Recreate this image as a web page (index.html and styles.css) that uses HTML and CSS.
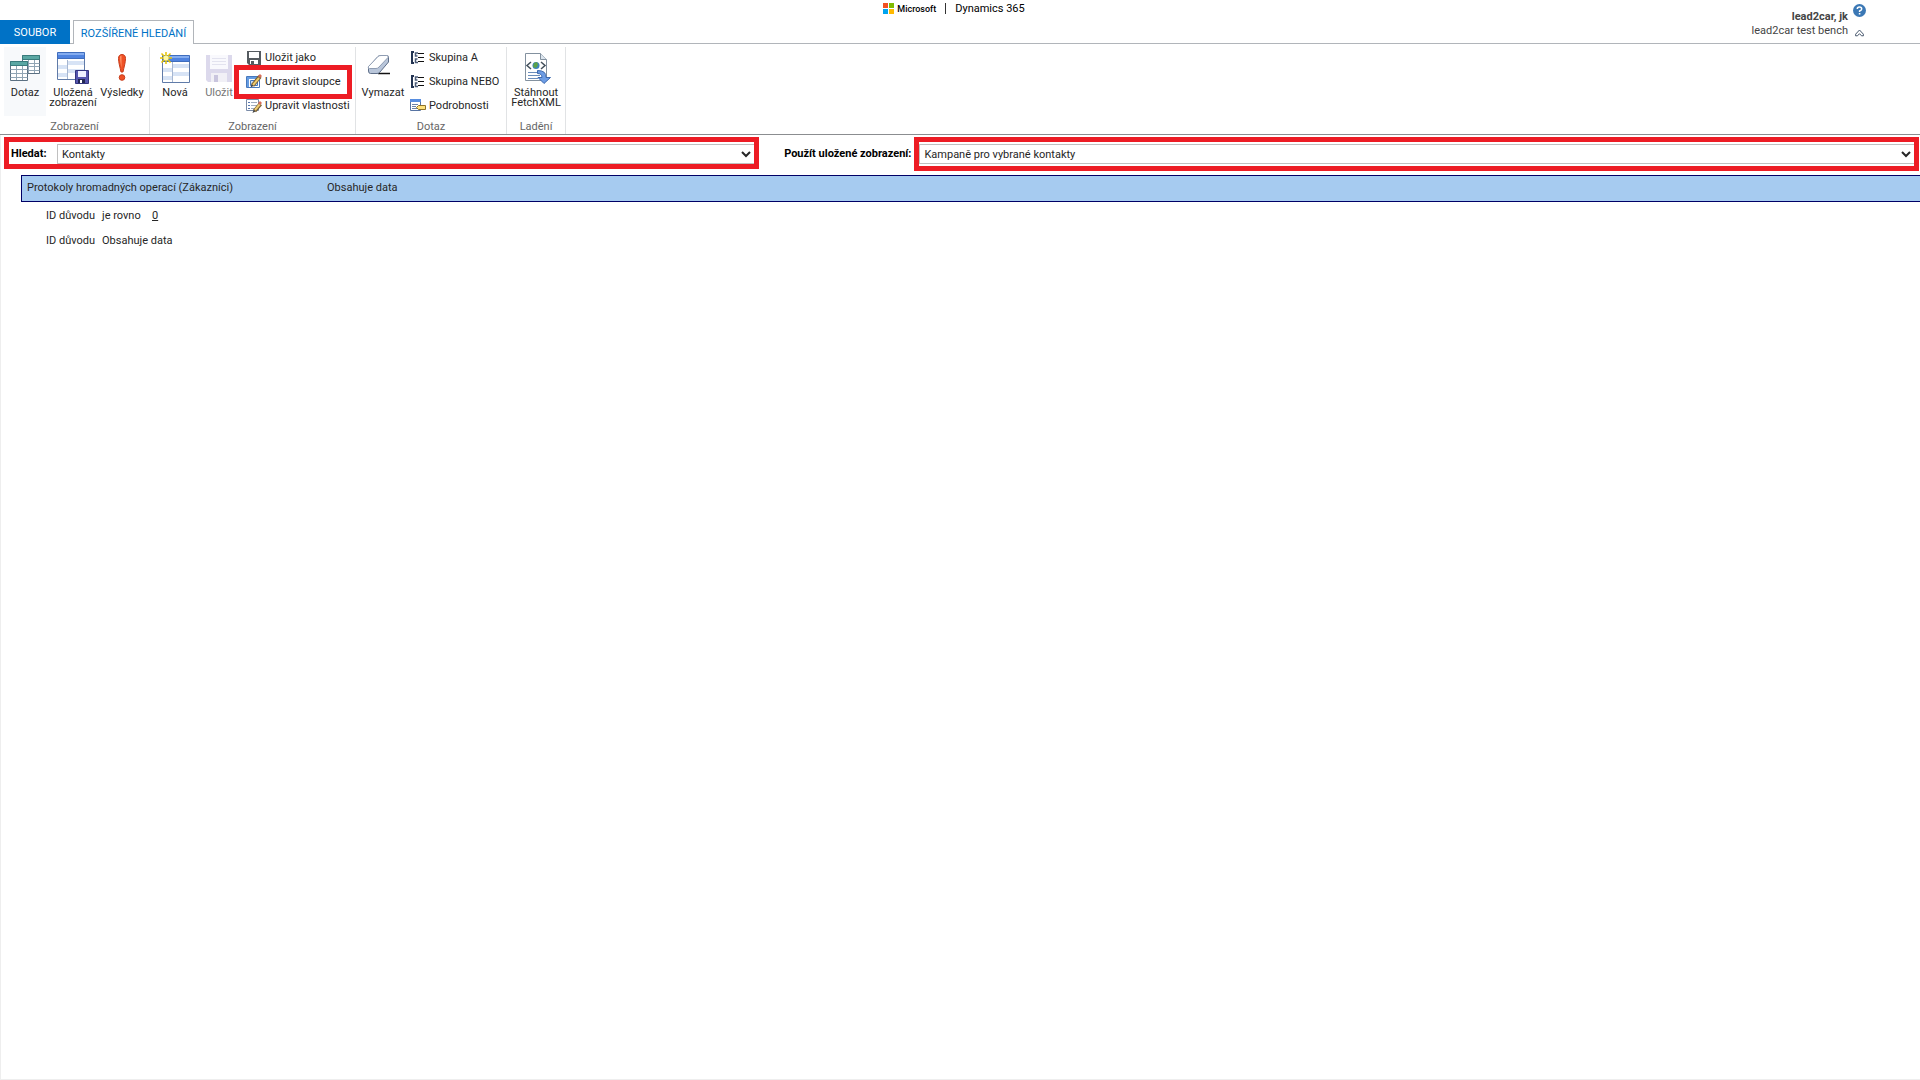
FILE: index.html
```html
<!DOCTYPE html>
<html lang="cs">
<head>
    <meta charset="UTF-8">
    <meta name="viewport" content="width=device-width, initial-scale=1.0">
    <title>Rozšířené hledání</title>
    <link rel="stylesheet" href="styles.css">
</head>
<body>

<header class="top">
    <nav class="tabs">
        <button class="tab tab-file">SOUBOR</button>
        <button class="tab tab-active">ROZŠÍŘENÉ HLEDÁNÍ</button>
    </nav>
    <div class="brand">
        <svg class="ms-logo" width="11" height="11" viewBox="0 0 11 11">
            <path fill="#f25022" d="M0 0h5v5H0z"/>
            <path fill="#7fba00" d="M6 0h5v5H6z"/>
            <path fill="#00a4ef" d="M0 6h5v5H0z"/>
            <path fill="#ffb900" d="M6 6h5v5H6z"/>
        </svg>
        <span class="brand-ms">Microsoft</span>
        <span class="brand-line"></span>
        <span class="brand-app">Dynamics 365</span>
    </div>
    <div class="user">
        <div class="user-text">
            <strong>lead2car, jk</strong>
            <span>lead2car test bench</span>
        </div>
        <div class="user-icons">
            <button class="icon-button" aria-label="Nápověda">
                <svg width="13" height="13" viewBox="0 0 13 13">
                    <circle cx="6.5" cy="6.5" r="6.5" fill="#3b78b5"/>
                    <path d="M4.3 5Q4.3 3 6.5 3T8.7 5Q8.7 6.1 6.6 7v1.1" fill="none" stroke="#fff" stroke-width="1.5"/>
                    <path fill="#fff" d="M5.8 9h1.6v1.5H5.8z"/>
                </svg>
            </button>
            <button class="icon-button" aria-label="Sbalit pás karet">
                <svg width="9" height="8" viewBox="0 0 9 8">
                    <path d="M.6 5.2 4.5 1l3.900 4.200v1.600H6.500L4.500 4.700 2.500 6.800H.6z" fill="#fff" stroke="#44546a"/>
                </svg>
            </button>
        </div>
    </div>
</header>

<!-- Ribbon -->
<section class="ribbon">
    <div class="group group-show">
        <div class="tools">
            <button class="big selected">
                <svg width="32" height="32" viewBox="0 0 32 32">
                    <path fill="#fff" stroke="#5b7082" d="M13.500 3.500h17v18h-17z"/>
                    <path fill="#5aa7a3" stroke="#397b7c" d="M13.500 3.500h17v4h-17z"/>
                    <path fill="none" stroke="#91a5b4" d="M13.500 11.500h17M13.500 14.500h17M13.500 18.500h17M19.500 8v13M25.500 8v13"/>
                    <path fill="#fff" stroke="#5b7082" d="M1.500 9.500h17v19h-17z"/>
                    <path fill="#5aa7a3" stroke="#397b7c" d="M1.500 9.500h17v4h-17z"/>
                    <path fill="none" stroke="#91a5b4" d="M1.500 17.500h17M1.500 21.500h17M1.500 25.500h17M7.500 14v14M13.500 14v14"/>
                </svg>
                <span>Dotaz</span>
            </button>
            <button class="big saved">
                <svg width="32" height="32" viewBox="0 0 32 32">
                    <path fill="#fff" stroke="#607ba8" d="M.5 1.500h27v26H.5z"/>
                    <path fill="#d7e3f5" d="M11 9h16v4H11zM11 17h16v4H11zM1 13h10v4H1zM1 21h10v4H1z"/>
                    <path fill="none" stroke="#a6b6d0" d="M10.500 8v19"/>
                    <path fill="#4f83df" stroke="#3f6dbd" d="M.5.500h27v6H.5z"/>
                    <path fill="#84acef" d="M1 1h26v2H1z"/>
                    <path fill="#5656ae" stroke="#33347e" d="M18.500 18.500h13v13h-13z"/>
                    <path fill="#eef0ff" d="M21 19h8v6h-8z"/>
                    <path fill="#222753" d="M21 27h7v4h-7z"/>
                    <path fill="#fff" d="M23 28h2v3h-2z"/>
                </svg>
                <span>Uložená zobrazení</span>
            </button>
            <button class="big results">
                <svg width="32" height="32" viewBox="0 0 32 32">
                    <path fill="#ef5126" stroke="#c73d1c" d="M12.500 6.500c0-2.500 1.200-4 3.500-4s3.500 1.500 3.500 4c0 4-1.500 8.500-2.500 13.500h-2c-1-5-2.500-9.500-2.500-13.500z"/>
                    <path fill="#ff9567" d="M14 5q0-1.500 1.500-1.500V16Q14 10 14 5z"/>
                    <circle cx="16" cy="25.500" r="2.800" fill="#ef5126" stroke="#c73d1c"/>
                </svg>
                <span>Výsledky</span>
            </button>
        </div>
        <div class="group-name">Zobrazení</div>
    </div>

    <div class="group group-view">
        <div class="tools">
            <button class="big new">
                <svg width="32" height="32" viewBox="0 0 32 32">
                    <path fill="#fff" stroke="#607ba8" d="M3.500 4.500h27v26h-27z"/>
                    <path fill="#d7e3f5" d="M14 12h16v4H14zM14 20h16v4H14zM4 16h10v4H4zM4 24h10v4H4z"/>
                    <path fill="none" stroke="#a6b6d0" d="M13.500 10v20"/>
                    <path fill="#4f83df" stroke="#3f6dbd" d="M3.500 3.500h27v6h-27z"/>
                    <path fill="#84acef" d="M4 4h26v2H4z"/>
                    <path stroke="#e9c400" stroke-width="1.500" d="M7 0v12M1 6h12M2.500 1.500l9 9M11.500 1.500l-9 9"/>
                    <circle cx="7" cy="6" r="2.500" fill="#fff9a6"/>
                </svg>
                <span>Nová</span>
            </button>
            <button class="big save" disabled>
                <svg width="32" height="32" viewBox="0 0 32 32">
                    <path fill="#dcd9ec" d="M3 3h26v27H5l-2-2z"/>
                    <path fill="#f9f9fd" d="M7 3h18v14H7z"/>
                    <path stroke="#e3e3ef" d="M9 6.500h14M9 9.500h14M9 12.500h14"/>
                    <path fill="#f1f0f6" d="M8 21h16v9H8z"/>
                    <path fill="#c9c5de" d="M11 23h4v7h-4z"/>
                </svg>
                <span>Uložit</span>
            </button>
            <div class="small-list">
                <button class="small">
                    <svg width="16" height="16" viewBox="0 0 16 16">
                        <path fill="#555b60" d="M1 1h14v14H3l-2-2z"/>
                        <path fill="#fff" d="M3 2h10v6H3zM4 10h8v4H4z"/>
                        <path fill="#555b60" d="M5 11h3v4H5z"/>
                    </svg>
                    <span>Uložit jako</span>
                </button>
                <button class="small marked">
                    <svg width="16" height="16" viewBox="0 0 16 16">
                        <path fill="#fff" stroke="#4778bc" d="M.5 2.500h13v11H.5z"/>
                        <path fill="#659ce2" d="M1 3h12v2H1zM1 5h2v8H1z"/>
                        <path fill="#c7dcf6" stroke="#4778bc" d="M4.500 6.500h7v5h-7z"/>
                        <path stroke="#795e30" stroke-width="4" d="m6.500 11.500 7.500-9"/>
                        <path stroke="#efcc70" stroke-width="2" d="m7 11 6-7"/>
                        <path fill="#444" d="m4.500 13.500 1-3 2 1.500z"/>
                        <path fill="#d66f59" d="m12 2 2-2 2 2-2 2z"/>
                    </svg>
                    <span>Upravit sloupce</span>
                </button>
                <button class="small">
                    <svg width="16" height="16" viewBox="0 0 16 16">
                        <path fill="#fff" stroke="#7b8ca8" d="M.5 1.500h12v11H.5z"/>
                        <path stroke="#5878b1" d="M2 4.500h2M2 7.500h2M2 10.500h2"/>
                        <path stroke="#a1adbe" d="M5 4.500h6M5 7.500h6M5 10.500h4"/>
                        <path stroke="#795e30" stroke-width="4" d="m8.500 13 6-7"/>
                        <path stroke="#efcc70" stroke-width="2" d="m9 12 5-6"/>
                        <path fill="#444" d="m6.500 15 1-3 2 1.500z"/>
                        <path fill="#d66f59" d="m12 5 2-2 2 2-2 2z"/>
                    </svg>
                    <span>Upravit vlastnosti</span>
                </button>
            </div>
        </div>
        <div class="group-name">Zobrazení</div>
    </div>

    <div class="group group-query">
        <div class="tools">
            <button class="big clear">
                <svg width="32" height="32" viewBox="0 0 32 32">
                    <path stroke="#111" stroke-width="1.500" d="M11 21.500h12"/>
                    <path fill="#b9c6da" stroke="#5f6f89" d="M1.500 15 11 4.500q1.200-1 3-1h5.500q2.500 0 2 2.500v4L13 20q-1.200 1.500-3 1.500H3.500q-2 0-2-2.500z"/>
                    <path fill="#fff" stroke="#8f9db3" d="M1.500 14.500 11 4.500q1.200-1 3-1h5.500q2.500 0 1.500 2L12 15q-1 1.500-3 1.500H2.500q-2 0-1-2z"/>
                </svg>
                <span>Vymazat</span>
            </button>
            <div class="small-list">
                <button class="small">
                    <svg width="16" height="16" viewBox="0 0 16 16">
                        <g id="group-icon" fill="none">
                            <path stroke="#243553" stroke-width="2" d="M4 2H2v11h2"/>
                            <path stroke="#4c5c78" stroke-width="1.500" d="M8 3H5.500v3H7.500M7.500 9h-2v3.500H8"/>
                            <path stroke="#111" d="M8 3.500h6M8 7.500h6M8 11.500h6"/>
                        </g>
                    </svg>
                    <span>Skupina A</span>
                </button>
                <button class="small">
                    <svg width="16" height="16" viewBox="0 0 16 16"><use href="#group-icon"/></svg>
                    <span>Skupina NEBO</span>
                </button>
                <button class="small">
                    <svg width="16" height="16" viewBox="0 0 16 16">
                        <path fill="#fff" stroke="#5774a3" d="M.5 1.500h10v11H.5z"/>
                        <path fill="#578de0" d="M0 1h11v3H0z"/>
                        <path stroke="#6a82a8" d="M2 6.500h6M2 8.500h4M2 10.500h5"/>
                        <path fill="#ffe27c" stroke="#8e722a" d="M8.500 7.500h7v4h-7l-2-2z"/>
                    </svg>
                    <span>Podrobnosti</span>
                </button>
            </div>
        </div>
        <div class="group-name">Dotaz</div>
    </div>

    <div class="group group-debug">
        <div class="tools">
            <button class="big">
                <svg width="32" height="32" viewBox="0 0 32 32">
                    <path fill="#fff" stroke="#83919f" d="M5.500 1.500h15l6 6v21h-21z"/>
                    <path fill="#dce5ee" stroke="#83919f" d="M20.500 1.500v6h6"/>
                    <path fill="none" stroke="#43505b" stroke-width="1.500" d="m11 10-4 3.500 4 3.500M21 10l4 3.500-4 3.500"/>
                    <circle cx="16" cy="13.500" r="3.500" fill="#3d83bd"/>
                    <path fill="#5da347" d="m14 11 3-1 1 3-2 3-3-1z"/>
                    <path stroke="#6c8ebc" d="M8 20.500h12M8 23.500h12M8 26.500h10"/>
                    <path fill="#6d9de5" stroke="#3c68ae" d="M17.500 18.500q9 0 8.500 7h4.500l-6.500 6-6-6h4q0-4-4.500-4z"/>
                </svg>
                <span>Stáhnout FetchXML</span>
            </button>
        </div>
        <div class="group-name">Ladění</div>
    </div>
</section>

<main>
    <form class="search">
        <div class="field field-entity">
            <label for="entity">Hledat:</label>
            <select id="entity"><option>Kontakty</option></select>
        </div>
        <label class="view-label" for="view">Použít uložené zobrazení:</label>
        <div class="field field-view">
            <select id="view"><option>Kampaně pro vybrané kontakty</option></select>
        </div>
    </form>

    <!-- Query conditions -->
    <div class="related">
        <span class="related-name">Protokoly hromadných operací (Zákazníci)</span>
        <span>Obsahuje data</span>
    </div>
    <div class="condition">
        <span class="attribute">ID důvodu</span>
        <span class="operator">je rovno</span>
        <a href="#">0</a>
    </div>
    <div class="condition">
        <span class="attribute">ID důvodu</span>
        <span class="operator">Obsahuje data</span>
    </div>
</main>

</body>
</html>
```
FILE: styles.css
```css
*,
*::after {
    box-sizing: border-box;
}
body {
    margin: 0;
    min-height: 100vh;
    display: flex;
    flex-direction: column;
    font-family: Roboto, "Open Sans", sans-serif;
    font-size: 11px;
    line-height: 14px;
    color: #262626;
    background: #fff;
}
button {
    font: inherit;
    color: inherit;
    background: none;
    border: 0;
    padding: 0;
    cursor: pointer;
    white-space: nowrap;
}
svg {
    display: block;
    flex: none;
}

/* Header */
.top {
    display: grid;
    grid-template-columns: 1fr auto 1fr;
    height: 44px;
    border-bottom: 1px solid #b1b5ba;
}
.tabs {
    display: flex;
    align-items: flex-end;
    gap: 3px;
}
.tab {
    height: 24px;
    margin-bottom: -1px;
}
.tab-file {
    width: 70px;
    padding-top: 2px;
    color: #fff;
    background: #0072c6;
}
.tab-active {
    width: 121px;
    padding-top: 3px;
    color: #0072c6;
    background: #fff;
    border: 1px solid #b1b5ba;
    border-bottom: 0;
}
.brand {
    display: flex;
    align-items: center;
    height: 17px;
    padding-right: 12px;
    color: #000;
}
.brand-ms {
    margin-left: 3px;
    font-size: 9px;
    font-weight: 500;
}
.brand-line {
    width: 1px;
    height: 11px;
    margin: 0 9px;
    background: #333;
}
.user {
    display: flex;
    justify-content: flex-end;
    gap: 5px;
    padding: 4px 54px 0 0;
    color: #444;
}
.user-text {
    display: flex;
    flex-direction: column;
    align-items: flex-end;
    padding-top: 6px;
}
.user-icons {
    display: flex;
    flex-direction: column;
    align-items: center;
    gap: 12px;
}

/* Ribbon */
.ribbon {
    display: flex;
    height: 91px;
    padding-top: 3px;
    border-bottom: 1px solid #8b8d90;
}
.group {
    display: flex;
    flex-direction: column;
    padding: 0 4px;
    border-right: 1px solid #e1e3e5;
}
.group-show {
    width: 150px;
}
.group-view {
    width: 206px;
}
.group-query {
    width: 151px;
}
.group-debug {
    width: 59px;
}
.tools {
    display: flex;
    height: 73px;
}
.big {
    display: flex;
    flex: none;
    flex-direction: column;
    align-items: center;
    height: 69px;
    padding-top: 5px;
    line-height: 10px;
}
.big span {
    margin-top: 4px;
}
.selected {
    width: 42px;
    background: #f7f9fb;
}
.saved {
    width: 54px;
    white-space: normal;
}
.results {
    width: 44px;
}
.new {
    width: 42px;
}
.save {
    width: 46px;
    color: #777;
}
.clear {
    width: 46px;
}
.group-debug .big {
    width: 50px;
    white-space: normal;
}
.small-list {
    margin-top: -1px;
}
.small {
    display: flex;
    align-items: center;
    gap: 3px;
    height: 24px;
    padding: 0 4px;
    position: relative;
}
.group-name {
    text-align: center;
    color: #666;
}

/* Red frames */
.marked::after {
    content: "";
    position: absolute;
    top: -5px;
    left: -8px;
    width: 118px;
    height: 34px;
    border: 5px solid #ed1c24;
    z-index: 1;
}
.field {
    display: flex;
    align-items: flex-start;
    padding-top: 2px;
    border: 5px solid #ed1c24;
}

/* Search form */
main {
    flex: 1;
    border-left: 1px solid #eee;
    border-bottom: 1px solid #eee;
}
.search {
    display: flex;
    align-items: flex-start;
    padding: 2px 1px 0 3px;
    color: #000;
}
.search label {
    font-weight: 700;
}
.field-entity {
    flex: 74;
    height: 32px;
    padding-left: 2px;
}
.field-entity label {
    width: 46px;
    padding-top: 3px;
}
.view-label {
    width: 155px;
    padding: 10px 3px 0 0;
    text-align: right;
}
.field-view {
    flex: 99;
    height: 34px;
}
select {
    flex: 1;
    height: 20px;
    font: inherit;
    color: #262626;
    background: #fff;
    border: 1px solid #c0c0c0;
    border-right: 0;
    border-radius: 0;
}

/* Query */
.related {
    display: flex;
    height: 27px;
    margin: 4px 0 1px 20px;
    padding: 5px;
    background: #a6cbf0;
    border: 1px solid #000066;
    border-right: 0;
}
.related-name {
    width: 300px;
}
.condition {
    display: flex;
    align-items: center;
    height: 25px;
    padding-left: 45px;
}
.attribute {
    width: 56px;
}
.operator {
    min-width: 50px;
}
.condition a {
    color: #262626;
}
```
